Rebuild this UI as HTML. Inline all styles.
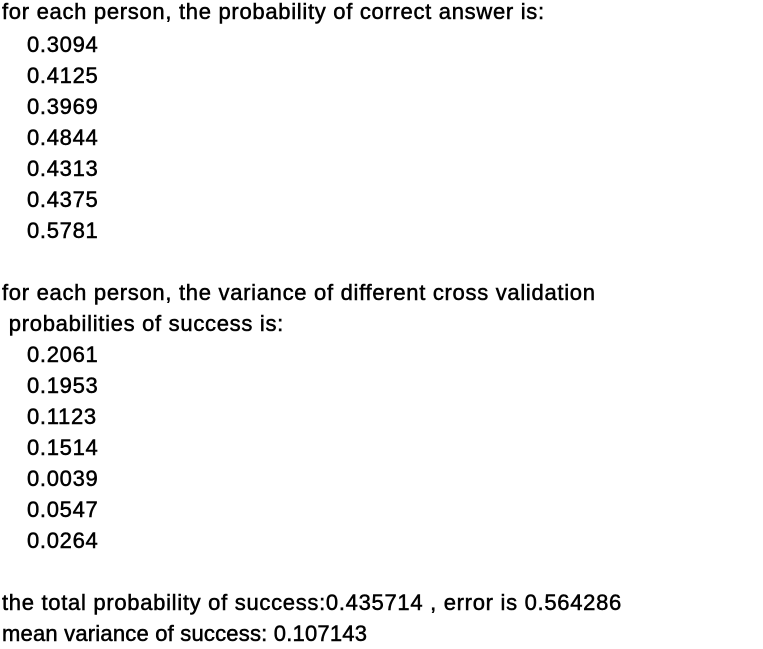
<!DOCTYPE html>
<html><head><style>
body{margin:0;width:763px;height:647px;background:#fff;overflow:hidden;font-family:"Liberation Sans",sans-serif;font-size:22px;letter-spacing:0.7px;color:#000;-webkit-text-stroke:0.5px #000}
div{position:absolute;line-height:31px;white-space:pre;left:2px}
.n{left:27px}
</style></head><body>
<div style="top:-4px">for each person, the probability of correct answer is:</div>
<div class="n" style="top:29px">0.3094</div>
<div class="n" style="top:60px">0.4125</div>
<div class="n" style="top:91px">0.3969</div>
<div class="n" style="top:122px">0.4844</div>
<div class="n" style="top:153px">0.4313</div>
<div class="n" style="top:184px">0.4375</div>
<div class="n" style="top:215px">0.5781</div>
<div style="top:277px">for each person, the variance of different cross validation</div>
<div style="top:308px"> probabilities of success is:</div>
<div class="n" style="top:339px">0.2061</div>
<div class="n" style="top:370px">0.1953</div>
<div class="n" style="top:401px">0.1123</div>
<div class="n" style="top:432px">0.1514</div>
<div class="n" style="top:463px">0.0039</div>
<div class="n" style="top:494px">0.0547</div>
<div class="n" style="top:525px">0.0264</div>
<div style="top:587px">the total probability of success:0.435714 , error is 0.564286</div>
<div style="top:618px;letter-spacing:0.2px">mean variance of success: 0.107143</div>
</body></html>
